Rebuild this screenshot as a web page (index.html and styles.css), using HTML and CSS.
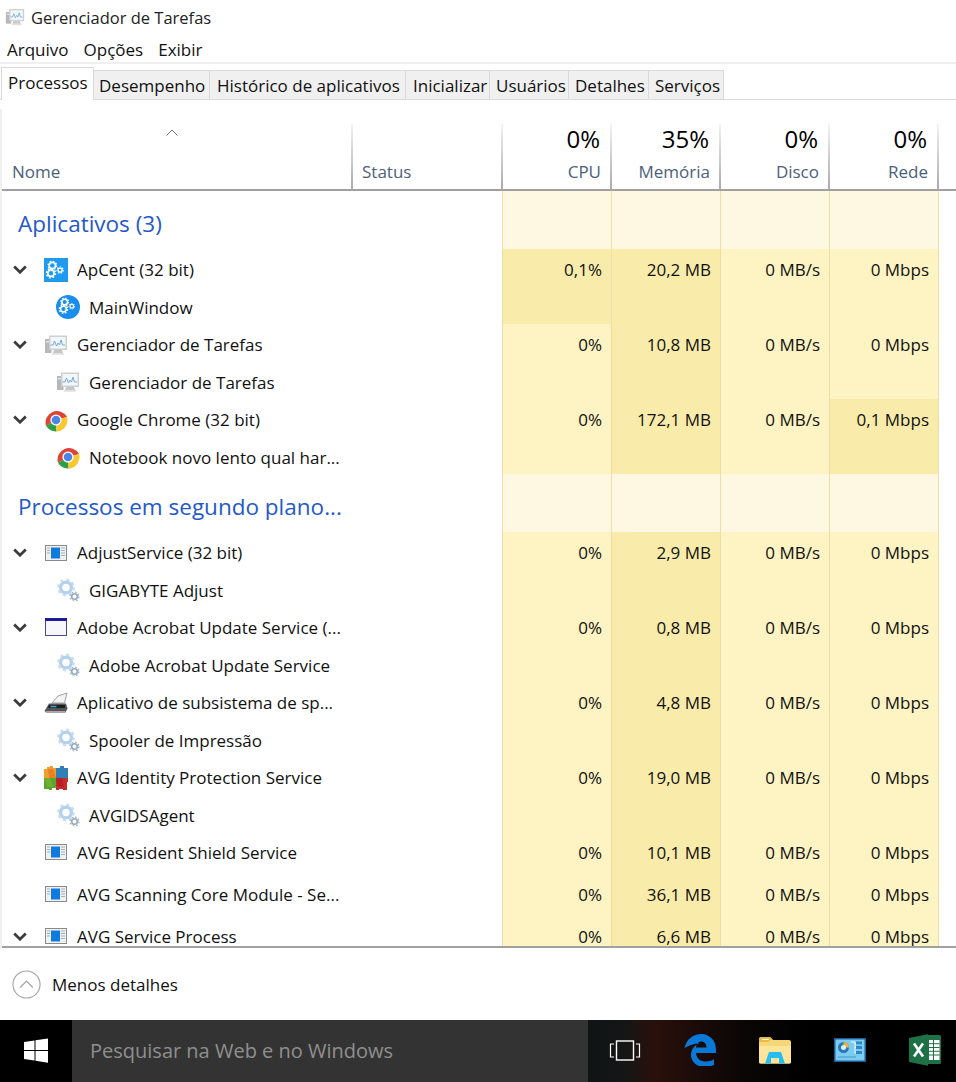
FILE: index.html
```html
<!DOCTYPE html>
<html lang="pt-BR">
<head>
<meta charset="utf-8">
<title>Gerenciador de Tarefas</title>
<link rel="stylesheet" href="styles.css">
</head>
<body>
<svg class="defs" aria-hidden="true">
  <symbol id="chev" viewBox="0 0 14 9"><path d="M1.200 1.500 7 7.200l5.800-5.700" fill="none" stroke="#3c3c3c" stroke-width="2.800"/></symbol>
  <symbol id="gears" viewBox="0 0 24 24">
    <circle cx="8" cy="6" r="3.400" fill="none" stroke="#fff" stroke-width="1.800"/>
    <circle cx="8" cy="6" r="4.600" fill="none" stroke="#fff" stroke-width="1.400" stroke-dasharray="1.800 1.800"/>
    <circle cx="6.500" cy="14.500" r="3.400" fill="none" stroke="#fff" stroke-width="1.800"/>
    <circle cx="6.500" cy="14.500" r="5" fill="none" stroke="#fff" stroke-width="1.600" stroke-dasharray="2 1.900"/>
    <circle cx="16.500" cy="11" r="2.200" fill="none" stroke="#fff" stroke-width="1.500"/>
    <circle cx="16.500" cy="11" r="3.400" fill="none" stroke="#fff" stroke-width="1.200" stroke-dasharray="1.500 1.500"/>
  </symbol>
  <symbol id="apcent" viewBox="0 0 24 24"><rect width="24" height="24" fill="#1e9af0"/><use href="#gears" x="1" y="2" width="22" height="22"/></symbol>
  <symbol id="mainwin" viewBox="0 0 24 24"><circle cx="12" cy="12" r="12" fill="#1a8eee"/><use href="#gears" x="2" y="2" width="20" height="20"/></symbol>
  <symbol id="taskmgr" viewBox="0 0 24 24">
    <rect x="1" y="6" width="6.500" height="14" fill="#b8b8b8"/><rect x="2" y="8" width="4" height="1.400" fill="#e6e6e6"/>
    <rect x="5" y="2.500" width="18" height="14.500" fill="#cfcfcf"/><rect x="6.500" y="4" width="15" height="11.500" fill="#f2f7fb"/>
    <path d="M6.500 12 9 12l1.500-4 2 5 1.500-3 1.500 2 1.500-5 1.500 5h2.500" fill="none" stroke="#6ba0d6" stroke-width=".9"/>
    <path d="M10 17h8l1 3H9z" fill="#c6c6c6"/><rect x="8" y="20" width="12" height="1.800" fill="#e2e2e2"/>
  </symbol>
  <symbol id="chrome" viewBox="0 0 24 24">
    <path d="M12 12 23.100 9A11.500 11.500 0 0 0 2 17.800Z" fill="#de4335"/>
    <path d="M12 12 2 17.800A11.500 11.500 0 0 0 12.500 23.500Z" fill="#2f9e48"/>
    <path d="M12 12 12.500 23.500A11.500 11.500 0 0 0 23.100 9Z" fill="#f8c92e"/>
    <circle cx="12" cy="12" r="5.600" fill="#fff"/><circle cx="12" cy="12" r="4.300" fill="#4a86e8"/>
  </symbol>
  <symbol id="appwin" viewBox="0 0 24 24">
    <rect x="1.500" y="4.500" width="21" height="15" fill="#f1f1f1" stroke="#8a8a8a"/>
    <rect x="7" y="6.500" width="9" height="11" fill="#0f7be0"/>
    <path d="M3 7h3M3 9.500h3M3 12h3M17 7h4M17 9.500h4M17 12h4M17 14.500h4" stroke="#9fb0bf" stroke-width="1"/>
  </symbol>
  <symbol id="frame" viewBox="0 0 24 24">
    <rect x="1.500" y="2.500" width="21" height="17" fill="#f6f6fb" stroke="#4a4a8c"/>
    <rect x="1" y="2" width="22" height="3" fill="#1c1c9c"/>
  </symbol>
  <symbol id="svc" viewBox="0 0 24 24">
    <circle cx="10" cy="9.500" r="5.400" fill="none" stroke="#b4d0ec" stroke-width="3.400"/>
    <circle cx="10" cy="9.500" r="7.800" fill="none" stroke="#c6dcf2" stroke-width="2.200" stroke-dasharray="3 3.130"/>
    <circle cx="10" cy="9.500" r="3.300" fill="#fbfdff"/>
    <circle cx="18.500" cy="18.500" r="2.800" fill="#fff" stroke="#93a9bd" stroke-width="1.600"/>
    <circle cx="18.500" cy="18.500" r="4.400" fill="none" stroke="#a2b6c8" stroke-width="1.300" stroke-dasharray="1.700 1.760"/>
  </symbol>
  <symbol id="printer" viewBox="0 0 24 24">
    <path d="M8 12 14 5l9-3-2.500 10z" fill="#f4f4f4" stroke="#8a8a8a" stroke-width=".8"/>
    <path d="M.5 20 5 12.500h17l1.500 5-2 4H2z" fill="#565656"/>
    <path d="M5 14h16v3H4z" fill="#1f1f1f"/><path d="M6.500 14.800h6v1.500h-6z" fill="#3fa5e0"/>
    <path d="M1.500 20h20l-.5 2H3z" fill="#a8a8a8"/>
  </symbol>
  <symbol id="avg" viewBox="0 0 24 24">
    <path d="M0 3h3V1h3V0h3v2h3v10H0z" fill="#f2a02a"/>
    <path d="M12 2h4V0h4v2h4v10H12z" fill="#2f80b8"/>
    <path d="M0 12h12v10H8v2H5v-1H0z" fill="#58a52f"/>
    <path d="M12 12h12v4h-1v8h-4v-1h-4v1h-3z" fill="#c92a2a"/>
    <path d="M4 3h5l3 9H5z" fill="#e8732a" opacity=".75"/><path d="M12 12h6l2 9h-6z" fill="#a81d22" opacity=".6"/>
    <path d="M0 12h6l3 9H4z" fill="#7cb52e" opacity=".7"/>
  </symbol>
</svg>

<header class="title">
  <svg class="title-ico"><use href="#taskmgr"/></svg>
  <span>Gerenciador de Tarefas</span>
</header>
<nav class="menu"><span>Arquivo</span><span>Opções</span><span>Exibir</span></nav>
<div class="tabs">
  <span class="tab active t1">Processos</span>
  <span class="tab t2">Desempenho</span>
  <span class="tab t3">Histórico de aplicativos</span>
  <span class="tab t4">Inicializar</span>
  <span class="tab t5">Usuários</span>
  <span class="tab t6">Detalhes</span>
  <span class="tab t7">Serviços</span>
</div>

<main class="rail">
  <div class="grid-wrap">
    <div class="row-grid head">
      <div class="hcell name-h"><svg class="sort" viewBox="0 0 12 7"><path d="M.5 6.500 6 1l5.500 5.500" fill="none" stroke="#707070"/></svg><span class="hlabel">Nome</span></div>
      <div class="hcell"><span class="hlabel">Status</span></div>
      <div class="hcell num"><span class="pct">0%</span><span class="hlabel">CPU</span></div>
      <div class="hcell num"><span class="pct">35%</span><span class="hlabel">Memória</span></div>
      <div class="hcell num"><span class="pct">0%</span><span class="hlabel">Disco</span></div>
      <div class="hcell num"><span class="pct">0%</span><span class="hlabel">Rede</span></div>
    </div>
    <div class="body">
      <div class="row-grid group"><div class="name grp">Aplicativos (3)</div><div class="st"></div><div class="g"></div><div class="g"></div><div class="g"></div><div class="g"></div></div>

      <div class="row-grid row"><div class="name"><svg class="chev"><use href="#chev"/></svg><svg class="ico"><use href="#apcent"/></svg><span>ApCent (32 bit)</span></div><div class="st"></div><div class="c hi">0,1%</div><div class="c hi">20,2 MB</div><div class="c">0 MB/s</div><div class="c">0 Mbps</div></div>
      <div class="row-grid row"><div class="name sub"><svg class="ico"><use href="#mainwin"/></svg><span>MainWindow</span></div><div class="st"></div><div class="c hi"></div><div class="c hi"></div><div class="c"></div><div class="c"></div></div>
      <div class="row-grid row"><div class="name"><svg class="chev"><use href="#chev"/></svg><svg class="ico"><use href="#taskmgr"/></svg><span>Gerenciador de Tarefas</span></div><div class="st"></div><div class="c">0%</div><div class="c hi">10,8 MB</div><div class="c">0 MB/s</div><div class="c">0 Mbps</div></div>
      <div class="row-grid row"><div class="name sub"><svg class="ico"><use href="#taskmgr"/></svg><span>Gerenciador de Tarefas</span></div><div class="st"></div><div class="c"></div><div class="c hi"></div><div class="c"></div><div class="c"></div></div>
      <div class="row-grid row"><div class="name"><svg class="chev"><use href="#chev"/></svg><svg class="ico"><use href="#chrome"/></svg><span>Google Chrome (32 bit)</span></div><div class="st"></div><div class="c">0%</div><div class="c hi">172,1 MB</div><div class="c">0 MB/s</div><div class="c hi">0,1 Mbps</div></div>
      <div class="row-grid row"><div class="name sub"><svg class="ico"><use href="#chrome"/></svg><span>Notebook novo lento qual har...</span></div><div class="st"></div><div class="c"></div><div class="c hi"></div><div class="c"></div><div class="c hi"></div></div>

      <div class="row-grid group"><div class="name grp">Processos em segundo plano...</div><div class="st"></div><div class="g"></div><div class="g"></div><div class="g"></div><div class="g"></div></div>

      <div class="row-grid row"><div class="name"><svg class="chev"><use href="#chev"/></svg><svg class="ico"><use href="#appwin"/></svg><span>AdjustService (32 bit)</span></div><div class="st"></div><div class="c">0%</div><div class="c hi">2,9 MB</div><div class="c">0 MB/s</div><div class="c">0 Mbps</div></div>
      <div class="row-grid row"><div class="name sub"><svg class="ico"><use href="#svc"/></svg><span>GIGABYTE Adjust</span></div><div class="st"></div><div class="c"></div><div class="c hi"></div><div class="c"></div><div class="c"></div></div>
      <div class="row-grid row"><div class="name"><svg class="chev"><use href="#chev"/></svg><svg class="ico"><use href="#frame"/></svg><span>Adobe Acrobat Update Service (...</span></div><div class="st"></div><div class="c">0%</div><div class="c hi">0,8 MB</div><div class="c">0 MB/s</div><div class="c">0 Mbps</div></div>
      <div class="row-grid row"><div class="name sub"><svg class="ico"><use href="#svc"/></svg><span>Adobe Acrobat Update Service</span></div><div class="st"></div><div class="c"></div><div class="c hi"></div><div class="c"></div><div class="c"></div></div>
      <div class="row-grid row"><div class="name"><svg class="chev"><use href="#chev"/></svg><svg class="ico"><use href="#printer"/></svg><span>Aplicativo de subsistema de sp...</span></div><div class="st"></div><div class="c">0%</div><div class="c hi">4,8 MB</div><div class="c">0 MB/s</div><div class="c">0 Mbps</div></div>
      <div class="row-grid row"><div class="name sub"><svg class="ico"><use href="#svc"/></svg><span>Spooler de Impressão</span></div><div class="st"></div><div class="c"></div><div class="c hi"></div><div class="c"></div><div class="c"></div></div>
      <div class="row-grid row"><div class="name"><svg class="chev"><use href="#chev"/></svg><svg class="ico"><use href="#avg"/></svg><span>AVG Identity Protection Service</span></div><div class="st"></div><div class="c">0%</div><div class="c hi">19,0 MB</div><div class="c">0 MB/s</div><div class="c">0 Mbps</div></div>
      <div class="row-grid row"><div class="name sub"><svg class="ico"><use href="#svc"/></svg><span>AVGIDSAgent</span></div><div class="st"></div><div class="c"></div><div class="c hi"></div><div class="c"></div><div class="c"></div></div>
      <div class="row-grid row tall"><div class="name"><span class="chev-slot"></span><svg class="ico"><use href="#appwin"/></svg><span>AVG Resident Shield Service</span></div><div class="st"></div><div class="c">0%</div><div class="c hi">10,1 MB</div><div class="c">0 MB/s</div><div class="c">0 Mbps</div></div>
      <div class="row-grid row tall"><div class="name"><span class="chev-slot"></span><svg class="ico"><use href="#appwin"/></svg><span>AVG Scanning Core Module - Se...</span></div><div class="st"></div><div class="c">0%</div><div class="c hi">36,1 MB</div><div class="c">0 MB/s</div><div class="c">0 Mbps</div></div>
      <div class="row-grid row tall"><div class="name"><svg class="chev"><use href="#chev"/></svg><svg class="ico"><use href="#appwin"/></svg><span>AVG Service Process</span></div><div class="st"></div><div class="c">0%</div><div class="c hi">6,6 MB</div><div class="c">0 MB/s</div><div class="c">0 Mbps</div></div>
    </div>
  </div>
</main>

<footer class="foot">
  <svg class="less" viewBox="0 0 30 30"><circle cx="15" cy="15" r="14" fill="none" stroke="#a6a6a6" stroke-width="1.200"/><path d="M8.500 18 15 11.500l6.500 6.500" fill="none" stroke="#a6a6a6" stroke-width="1.400"/></svg>
  <span>Menos detalhes</span>
</footer>

<div class="taskbar">
  <div class="start">
    <svg class="win" viewBox="0 0 24 25"><path d="M0 4 10.500 2.500V12H0zM11.500 2.300 24 .4V12H11.500zM0 13h10.500v9.500L0 21zM11.500 13H24v11.700l-12.500-2z" fill="#fff"/></svg>
  </div>
  <div class="search">Pesquisar na Web e no Windows</div>
  <div class="tray">
    <svg class="tb" viewBox="0 0 32 32"><path d="M5 10H1.500v13H5M27 10h3.500v13H27" fill="none" stroke="#fff" stroke-width="1.200"/><rect x="7.500" y="7" width="17" height="19" fill="none" stroke="#fff" stroke-width="1.400"/></svg>
    <svg class="tb" viewBox="0 0 32 32"><path fill="#0a78d7" fill-rule="evenodd" d="M.5 14C2.500 5 9.500 0 17 0c9 0 15 7 15 15.500V19H12c.3 6 5 8.500 10 8.500 3 0 5.500-.8 8-2.200V31c-3 1.200-6 1.800-9.500 1.800C12 32.800 7 27 7 21c0-5.500 3-9.500 8.500-12C10 9.500 5 11.500.5 14ZM12 13.500h10.500C22.500 9.800 20 7.500 17.500 7.500c-3 0-5.200 2.500-5.500 6Z"/></svg>
    <svg class="tb" viewBox="0 0 32 32"><path d="M0 6q0-3 2-3h9l3 3h16q2 0 2 2v20q0 1.500-2 1.500H2q-2 0-2-1.500z" fill="#f5d777"/><path d="M0 6q0-3 2-3h9l3 3h-3L9 8H0z" fill="#eab93f"/><rect x="3" y="5" width="7" height="1" fill="#fff"/><path d="M0 12h32v16q0 1.500-2 1.500H2Q0 29.500 0 28z" fill="#fce59a"/><path d="M6 29.500 10 18h12l4 11.500h-6V24h-8v5.500z" fill="#27bdf1"/></svg>
    <svg class="tb" viewBox="0 0 32 32"><rect y="4" width="32" height="24" fill="#1c5f96"/><rect x="1.500" y="5.500" width="29" height="21" fill="#7ccbf0"/><circle cx="9.500" cy="13.500" r="5.500" fill="#2a76b8"/><path d="M9.500 13.500V8a5.500 5.500 0 0 1 5.500 5.500z" fill="#f4b23c"/><circle cx="9.500" cy="13.500" r="2.500" fill="#d9f1fb"/><path d="M17 8h4v2h6M21 13.500h6M21 10v9h6" fill="none" stroke="#fff" stroke-width=".9"/><path d="M22 7.500h6v3h-6zM22 12h6v3h-6zM22 17h6v3h-6z" fill="#2f87c6"/><path d="M4 23h18" stroke="#5da7d6" stroke-width="1.500"/></svg>
    <svg class="tb" viewBox="0 0 32 32"><path d="M19 1h11.500q1.500 0 1.500 1.500v26q0 1.500-1.500 1.500H19z" fill="#1e7145"/><rect x="20" y="6" width="10.500" height="20" fill="#fff"/><path d="M20 9.700h10.500M20 13.500h10.500M20 17.300h10.500M20 21h10.500M24.500 6v20" stroke="#1e7145" stroke-width="1"/><path d="M0 4 19 .3v31.400L0 28z" fill="#1e7145"/><path d="M5 9.500 14 22.500M14 9.500 5 22.500" stroke="#fff" stroke-width="2.600"/></svg>
  </div>
</div>
</body>
</html>
```

FILE: styles.css
```css
* { box-sizing: border-box; }
html, body { margin: 0; height: 100%; }
body {
  display: flex;
  flex-direction: column;
  height: 1082px;
  overflow: hidden;
  background: #fff;
  color: #111;
  font-family: "Open Sans", "Noto Sans", "Liberation Sans", sans-serif;
  font-size: 17px;
}
.defs { display: block; width: 0; height: 0; flex: none; }

.title { height: 36px; flex: none; display: flex; align-items: center; padding: 0 0 2px 5px; gap: 6px; color: #222; font-size: 16.500px; }
.title-ico { width: 20px; height: 20px; }
.menu { height: 26px; flex: none; display: flex; align-items: center; padding: 0 0 0 7px; gap: 15px; }
.tabs {
  height: 38px; flex: none;
  display: flex; align-items: flex-end;
  border-top: 2px solid #f0f0f0;
  border-bottom: 1px solid #d9d9d9;
  padding-left: 1px;
}
.tab {
  height: 29px;
  display: flex; align-items: center;
  padding-left: 6px;
  white-space: nowrap;
  background: #f0f0f0;
  border: 1px solid #d9d9d9;
  border-left: 0;
  border-bottom: 0;
}
.tab.active { height: 33px; background: #fff; border-left: 1px solid #d9d9d9; margin-bottom: -1px; padding-bottom: 3px; }
.t1 { width: 93px; } .t2 { width: 116px; padding-left: 5px; } .t3 { width: 196px; padding-left: 7px; } .t4 { width: 84px; padding-left: 7px; }
.t5 { width: 79px; } .t6 { width: 80px; } .t7 { width: 75px; }

.rail { flex: 1; min-height: 0; margin-top: 9px; padding-top: 15px; border-left: 2px solid #f0f0f0; display: flex; }
.grid-wrap { flex: 1; min-width: 0; display: flex; flex-direction: column; border-bottom: 2px solid #a0a0a0; }
.row-grid { display: grid; grid-template-columns: 351px 150px 109px 109px 109px 109px; }
.head { height: 67px; flex: none; border-bottom: 2px solid #a0a0a0; }
.hcell {
  display: flex; flex-direction: column; justify-content: flex-end;
  padding: 0 9px 7px 9px;
  border-right: 2px solid #b0b0b0;
  border-image: linear-gradient(to bottom, #f4f4f4, #a8a8a8) 1;
}
.hcell.name-h { position: relative; padding-left: 10px; }
.sort { position: absolute; left: 164px; top: 5px; width: 12px; height: 7px; }
.hlabel { color: #4c6079; line-height: 22px; }
.num { align-items: flex-end; }
.pct { font-size: 24px; line-height: 30px; margin: 0 1px 7px 0; color: #000; }

.body { flex: 1; min-height: 0; overflow: hidden; }
.group { height: 58px; }
.name.grp { color: #2459c9; font-size: 22.500px; padding-left: 16px; padding-top: 6px; align-items: center; }
.g { background: #fef7e1; border-right: 1px solid #f0dca6; }
.st { border-right: 1px solid #f0dca6; }
.row { height: 37.500px; }
.tall { height: 42px; }
.name { display: flex; align-items: center; white-space: nowrap; padding-left: 11px; min-width: 0; }
.row .name, .row .c { padding-top: 4px; }
.tall .name, .tall .c { padding-top: 0; padding-bottom: 2px; }
.name.sub { padding-left: 54px; }
.chev { width: 14px; height: 9px; margin-right: 17px; flex: none; }
.chev-slot { width: 31px; flex: none; }
.ico { width: 24px; height: 24px; margin-right: 9px; flex: none; }
.c {
  display: flex; align-items: center; justify-content: flex-end;
  padding-right: 9px;
  background: #fdf3c3;
  border-right: 1px solid #f0dca6;
}
.c.hi { background: #f9ecab; }

.foot { height: 72px; flex: none; display: flex; align-items: center; padding-left: 12px; gap: 11px; }
.less { width: 29px; height: 29px; }

.taskbar { height: 62px; flex: none; display: flex; color: #fff; }
.start { width: 72px; background: #000; padding: 18px 0 0 24px; }
.win { display: block; width: 24px; height: 25px; }
.search { width: 516px; background: #333; color: #8f8f8f; font-size: 20px; padding: 17px 0 0 18px; }
.tray {
  flex: 1; display: flex; gap: 43px; align-items: flex-start; padding: 14px 0 0 21px;
  background: linear-gradient(90deg, #101414 0, #141616 10%, #2a100a 18%, #0a0606 42%, #000 60%);
}
.tb { width: 32px; height: 32px; flex: none; }
```
